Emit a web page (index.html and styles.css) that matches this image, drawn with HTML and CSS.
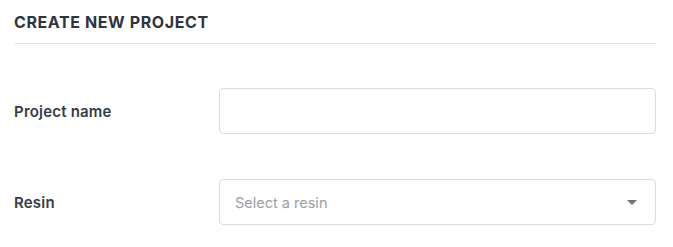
FILE: index.html
```html
<!DOCTYPE html>
<html>
<head>
<meta charset="utf-8">
<link rel="stylesheet" href="styles.css">
</head>
<body>
<div class="panel">
  <div class="header"><h2 class="title">CREATE NEW PROJECT</h2></div>
  <form class="form">
    <div class="row">
      <label class="label">Project name</label>
      <div class="input"></div>
    </div>
    <div class="row">
      <label class="label">Resin</label>
      <div class="input select">
        <span class="placeholder">Select a resin</span>
        <span class="caret"></span>
      </div>
    </div>
  </form>
</div>
</body>
</html>
```
FILE: styles.css
```css
html, body { margin: 0; padding: 0; background: #fff; }
body { font-family: Inter, "Noto Sans", sans-serif; color: #2f3640; }
.panel { padding: 0 17px 0 14px; }
.header { height: 43px; border-bottom: 1px solid #e6e8eb; display: flex; align-items: flex-start; }
.title { margin: 12px 0 0; font-size: 16px; font-weight: 700; letter-spacing: 0.6px; color: #2d3440; line-height: 20px; }
.form { display: flex; flex-direction: column; gap: 45px; margin-top: 44px; }
.row { display: grid; grid-template-columns: 205px 1fr; align-items: center; }
.label { font-size: 15px; font-weight: 600; letter-spacing: 0.2px; color: #353c46; }
.input { height: 44px; border: 1px solid #d9dce0; border-radius: 4px; }
.select { display: flex; align-items: center; justify-content: space-between; padding: 0 18px 0 15px; }
.placeholder { font-size: 14.5px; color: #9aa0a8; }
.caret { width: 0; height: 0; border-left: 5px solid transparent; border-right: 5px solid transparent; border-top: 5px solid #6e7379; }
```
